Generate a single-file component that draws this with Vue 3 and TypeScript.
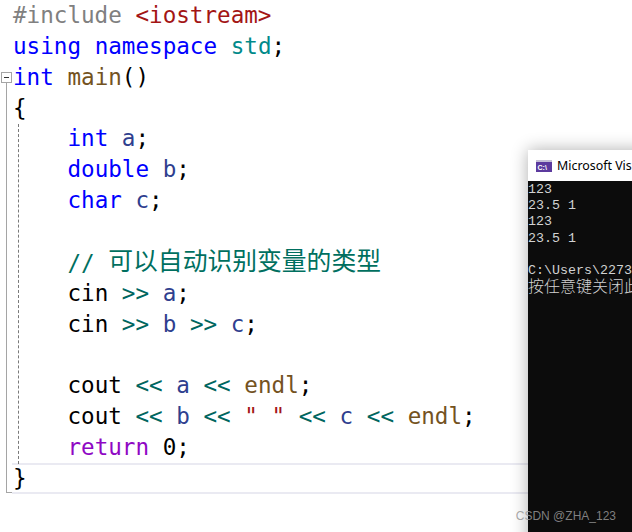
<script setup lang="ts">
type Tok = { t: string; c: string; cls?: string }
const k = '#0000ff', v = '#2f3f8f', o = '#00665f', f = '#74531f', s = '#a31515', p = '#000000', g = '#808080', m = '#8f08c4'
const lines: Tok[][] = [
  [{ t: '#include', c: g }, { t: ' ', c: p }, { t: '<iostream>', c: s }],
  [{ t: 'using', c: k }, { t: ' ', c: p }, { t: 'namespace', c: k }, { t: ' ', c: p }, { t: 'std', c: '#008a8a' }, { t: ';', c: p }],
  [{ t: 'int', c: k }, { t: ' ', c: p }, { t: 'main', c: f }, { t: '()', c: p }],
  [{ t: '{', c: p }],
  [{ t: '    ', c: p }, { t: 'int', c: k }, { t: ' ', c: p }, { t: 'a', c: v }, { t: ';', c: p }],
  [{ t: '    ', c: p }, { t: 'double', c: k }, { t: ' ', c: p }, { t: 'b', c: v }, { t: ';', c: p }],
  [{ t: '    ', c: p }, { t: 'char', c: k }, { t: ' ', c: p }, { t: 'c', c: v }, { t: ';', c: p }],
  [],
  [{ t: '    ', c: p }, { t: '// ', c: '#006f5f' }, { t: '可以自动识别变量的类型', c: '#006f5f', cls: 'cjk' }],
  [{ t: '    ', c: p }, { t: 'cin', c: p }, { t: ' ', c: p }, { t: '>>', c: o }, { t: ' ', c: p }, { t: 'a', c: v }, { t: ';', c: p }],
  [{ t: '    ', c: p }, { t: 'cin', c: p }, { t: ' ', c: p }, { t: '>>', c: o }, { t: ' ', c: p }, { t: 'b', c: v }, { t: ' ', c: p }, { t: '>>', c: o }, { t: ' ', c: p }, { t: 'c', c: v }, { t: ';', c: p }],
  [],
  [{ t: '    ', c: p }, { t: 'cout', c: p }, { t: ' ', c: p }, { t: '<<', c: o }, { t: ' ', c: p }, { t: 'a', c: v }, { t: ' ', c: p }, { t: '<<', c: o }, { t: ' ', c: p }, { t: 'endl', c: f }, { t: ';', c: p }],
  [{ t: '    ', c: p }, { t: 'cout', c: p }, { t: ' ', c: p }, { t: '<<', c: o }, { t: ' ', c: p }, { t: 'b', c: v }, { t: ' ', c: p }, { t: '<<', c: o }, { t: ' ', c: p }, { t: '" "', c: s }, { t: ' ', c: p }, { t: '<<', c: o }, { t: ' ', c: p }, { t: 'c', c: v }, { t: ' ', c: p }, { t: '<<', c: o }, { t: ' ', c: p }, { t: 'endl', c: f }, { t: ';', c: p }],
  [{ t: '    ', c: p }, { t: 'return', c: m }, { t: ' ', c: p }, { t: '0', c: p }, { t: ';', c: p }],
  [{ t: '}', c: p }]
]
const output = ['123', '23.5 1', '123', '23.5 1', '', 'C:\\Users\\2273']
</script>

<template>
  <div class="page">
    <div class="editor">
      <div
        v-for="(line, i) in lines"
        :key="i"
        class="line"
        :class="{ current: i === 15 }"
      >
        <span v-for="(tok, j) in line" :key="j" :class="tok.cls" :style="{ color: tok.c }">{{ tok.t }}</span>
      </div>
    </div>
    <div class="fold-box"><span class="minus"></span></div>
    <div class="fold-line"></div>
    <div class="fold-foot"></div>
    <div class="guide"></div>
    <div class="console">
      <div class="title">
        <svg class="cv" width="16" height="12" viewBox="0 0 16 12">
          <rect width="16" height="12" fill="#5c3a9e" />
          <rect y="0" width="16" height="2" fill="#c4bfd6" />
          <text x="1.5" y="9.5" font-size="7" font-family="Liberation Sans, sans-serif" font-weight="700" fill="#fff">C:\</text>
        </svg>
        <span class="title-text">Microsoft Visual Studio</span>
      </div>
      <div class="screen">
        <div v-for="(l, i) in output" :key="i" class="out">{{ l }}</div>
        <div class="out cn">按任意键关闭此</div>
      </div>
    </div>
    <div class="mark">CSDN @ZHA_123</div>
  </div>
</template>

<style>
html, body { margin: 0; background: #fff; overflow: hidden; }
</style>

<style scoped>
.page {
  position: relative;
  width: 632px;
  height: 532px;
  overflow: hidden;
  background: #fff;
}
.editor {
  padding: 0 0 0 13px;
  font-family: "DejaVu Sans Mono", "Noto Sans CJK SC", monospace;
  font-size: 22.6px;
  white-space: pre;
}
.cjk {
  font-family: "Noto Sans CJK SC", sans-serif;
  font-size: 24.8px;
  line-height: 1;
  vertical-align: 1px;
}
.line {
  height: 30.87px;
  line-height: 30.87px;
}
.line.current {
  margin-left: -1px;
  padding-left: 1px;
  box-sizing: border-box;
  box-shadow: inset 0 2px 0 #eaeaf2, inset 0 -2px 0 #eaeaf2;
}
.fold-box {
  position: absolute;
  left: 1px;
  top: 72px;
  width: 9px;
  height: 9px;
  border: 1px solid #a5a5a5;
  background: #fff;
  display: flex;
  align-items: center;
  justify-content: center;
}
.minus { width: 5px; height: 1px; background: #333; }
.fold-line {
  position: absolute;
  left: 6px;
  top: 83px;
  width: 1px;
  height: 409px;
  background: #a5a5a5;
}
.fold-foot {
  position: absolute;
  left: 6px;
  top: 492px;
  width: 6px;
  height: 1px;
  background: #a5a5a5;
}
.guide {
  position: absolute;
  left: 18px;
  top: 124px;
  width: 0;
  height: 340px;
  border-left: 1px dashed #7a7a7a;
}
.console {
  position: absolute;
  left: 528px;
  top: 150px;
  width: 200px;
  height: 400px;
  box-shadow: 0 0 16px rgba(0, 0, 0, 0.32);
  display: flex;
  flex-direction: column;
}
.title {
  height: 31px;
  background: #fff;
  display: flex;
  align-items: center;
  padding-left: 8px;
  gap: 5px;
}
.title-text {
  font-family: "Noto Sans", "Liberation Sans", sans-serif;
  font-size: 12.4px;
  color: #000;
  white-space: nowrap;
}
.screen {
  flex: 1;
  background: #0c0c0c;
  color: #d2d2d2;
  font-family: "Liberation Mono", "Noto Sans CJK SC", monospace;
  font-size: 13.33px;
  padding-top: 1px;
}
.out {
  height: 16.2px;
  line-height: 16.2px;
  white-space: pre;
}
.out.cn {
  font-family: "Noto Sans CJK SC", sans-serif;
  font-size: 16px;
  margin-top: -2px;
  font-weight: 300;
}
.mark {
  position: absolute;
  right: 16px;
  top: 509px;
  font-family: "Liberation Sans", sans-serif;
  font-size: 12px;
  letter-spacing: 0;
  color: rgba(150, 150, 150, 0.85);
  white-space: nowrap;
}
</style>
